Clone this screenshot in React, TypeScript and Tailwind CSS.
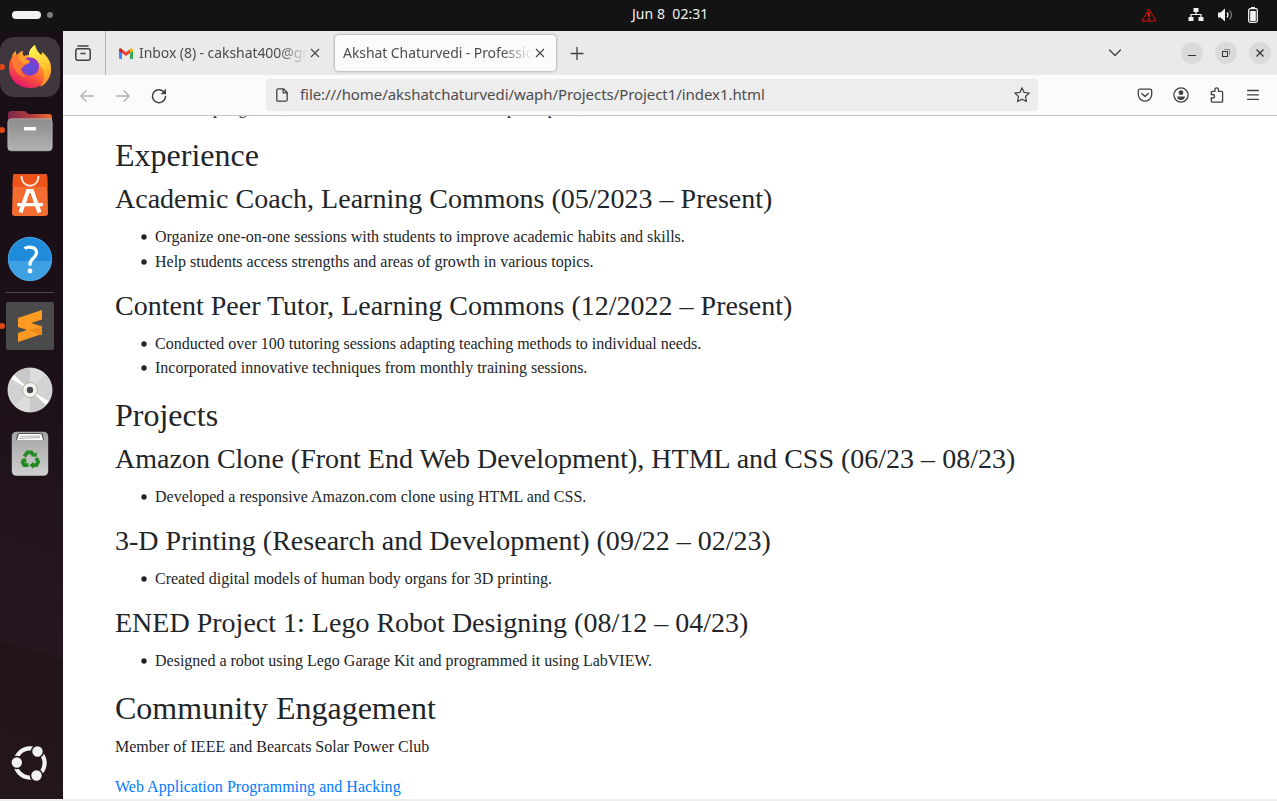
import React from "react";

function Dot() {
  return <span className="absolute -left-px top-1/2 -mt-[3px] h-[6px] w-[6px] rounded-full bg-[#dd4814]" />;
}

function Firefox() {
  return (
    <svg width="44" height="46" viewBox="0 0 44 46" className="-mt-[2px]">
      <defs>
        <linearGradient id="ffBody" x1="0.8" y1="0.05" x2="0.3" y2="1">
          <stop offset="0" stopColor="#fff144" />
          <stop offset="0.35" stopColor="#ffa42b" />
          <stop offset="0.65" stopColor="#ff5a36" />
          <stop offset="1" stopColor="#e3126f" />
        </linearGradient>
        <linearGradient id="ffTail" x1="0.3" y1="0" x2="0.7" y2="1">
          <stop offset="0" stopColor="#fff44f" />
          <stop offset="0.6" stopColor="#ffc531" />
          <stop offset="1" stopColor="#ff8a23" />
        </linearGradient>
        <radialGradient id="ffGlobe" cx="0.5" cy="0.6" r="0.55">
          <stop offset="0" stopColor="#5b50dd" />
          <stop offset="0.6" stopColor="#6f45cf" />
          <stop offset="1" stopColor="#a033c4" />
        </radialGradient>
      </defs>
      <path d="M4 14C4 11 6 9 8 8c0 2 0 3 1 4 2-2 4-4 6-4-1 3 0 4 1 5 2-1 3-1 5-1 0-5 3-8 6-10 1 5 3 7 6 10 1-1 1-1 1-3 5 4 9 9 9 16 0 12-9 20-21 20S1 36 1 25c0-4 1-8 3-11z" fill="url(#ffBody)" />
      <path d="M21 12c0-5 3-8 6-10 1 5 3 7 7 11l1-2c4 4 8 9 8 15 0 9-5 15-11 18 5-7 6-16 0-22-3-4-7-5-11-7z" fill="url(#ffTail)" />
      <circle cx="22" cy="23.5" r="9.2" fill="url(#ffGlobe)" />
      <path d="M8 12c4 0 7 1 10 5 3 0 4 1 4 2-1 2-4 2-5 3-2 1-2 3-4 3-1 4 2 7 5 9-8-1-12-7-13-12-1-5 0-8 3-10z" fill="#ff7a30" />
      <path d="M10 12c5 0 7 3 9 5l3 1c-1 2-4 2-5 3-4-2-7-4-7-9z" fill="#ffa02d" />
    </svg>
  );
}

function Folder() {
  return (
    <svg width="46" height="42" viewBox="0 0 46 42" className="mt-[2px]">
      <defs>
        <linearGradient id="fdBack" x1="0" x2="1">
          <stop offset="0" stopColor="#7b2849" />
          <stop offset="0.55" stopColor="#b83d3c" />
          <stop offset="1" stopColor="#ee6f31" />
        </linearGradient>
        <linearGradient id="fdFront" x1="0" y1="0" x2="0" y2="1">
          <stop offset="0" stopColor="#8c8c8c" />
          <stop offset="1" stopColor="#b2b2b2" />
        </linearGradient>
      </defs>
      <path d="M1 18V4q0-3 3-3h13q2 0 3 2l2 1h20q3 0 3 3v11z" fill="url(#fdBack)" />
      <rect x="0.8" y="8.8" width="44.4" height="32" rx="3.5" fill="url(#fdFront)" stroke="#c7c7c7" strokeWidth="0.6" />
      <rect x="17" y="17" width="12" height="3.4" rx="1" fill="#fff" />
    </svg>
  );
}

function Store() {
  return (
    <svg width="38" height="44" viewBox="0 0 38 44">
      <path d="M4 1h30q2 0 2.200 2L37 40q0 3-3 3H4q-3 0-3-3L2 3q0-2 2-2z" fill="#f36d32" />
      <path d="M4 1h30q2 0 2.200 2l.3 11h-35L2 3q0-2 2-2z" fill="#ee541a" />
      <path d="M10.500 3c0 13 17 13 17 0" fill="none" stroke="#ffe6da" strokeWidth="1.9" />
      <path d="M9.500 39.500l7.500-21.500h4l7.500 21.500" fill="none" stroke="#fff" strokeWidth="4" />
      <rect x="6" y="30" width="26" height="3.3" rx="1" fill="#fff" />
    </svg>
  );
}

function Help() {
  return (
    <svg width="46" height="46" viewBox="0 0 46 46">
      <clipPath id="hpClip"><circle cx="23" cy="23" r="22" /></clipPath>
      <g clipPath="url(#hpClip)">
        <path d="M0 0h46v25H0z" fill="#218bdb" />
        <path d="M0 25h46v21H0z" fill="#40a0e4" />
      </g>
      <circle cx="23" cy="23" r="21.7" fill="none" stroke="#59ade8" strokeWidth="0.7" />
      <path d="M17.500 12.500c3-1.800 12-2.500 12 4 0 5.500-6.500 6-6.500 11.500v1.500" fill="none" stroke="#fff" strokeWidth="3.2" />
      <circle cx="23" cy="35" r="2.4" fill="#fff" />
    </svg>
  );
}

function Sublime() {
  return (
    <svg width="48" height="48" viewBox="0 0 48 48">
      <rect width="48" height="48" rx="2" fill="#4b4b4b" />
      <path d="M12 31l12-4 12-3.500V32L12 40z" fill="#ff9b22" />
      <path d="M12 16l24-8v9.500L25 21l11 3.500V33L12 25z" fill="#ff9b22" />
      <path d="M36 24.500V33l-14-4.700z" fill="#ee8a1a" />
    </svg>
  );
}

function Disc() {
  return (
    <svg width="46" height="46" viewBox="0 0 46 46">
      <circle cx="23" cy="23" r="22" fill="#d2d2d2" stroke="#f0f0f0" strokeWidth="0.8" />
      <path d="M23 23L5 11a22 22 0 0 1 18-10zM23 23l18 12a22 22 0 0 1-18 10z" fill="#c9c9c9" />
      <path d="M23 23L23 1a22 22 0 0 1 15 6zM23 23v22a22 22 0 0 1-15-6z" fill="#dcdcdc" />
      <path d="M23 23L4.500 12l2.800-4zM23 23l18.500 11-2.800 4z" fill="#fff" />
      <circle cx="23" cy="23" r="7.4" fill="#f4f4f2" stroke="#aaa393" strokeWidth="0.8" />
      <circle cx="23" cy="23" r="3.2" fill="#4a4a4a" />
    </svg>
  );
}

function Trash() {
  return (
    <svg width="38" height="46" viewBox="0 0 38 46">
      <defs>
        <linearGradient id="trBody" x1="0" y1="0" x2="0" y2="1">
          <stop offset="0" stopColor="#a4a4a4" />
          <stop offset="1" stopColor="#cfcfcf" />
        </linearGradient>
      </defs>
      <rect x="0.8" y="0.8" width="36.4" height="44" rx="4.5" fill="url(#trBody)" />
      <path d="M5 9l1-5q1-2 3-2h20q3 0 3 2l1 5z" fill="#555" />
      <path d="M6 9l2-6h22l1 2 1 4z" fill="#fff" />
      <path d="M9 5.500l20-.5M8 7.500l21-1" stroke="#999" strokeWidth="0.8" />
      <g fill="none" stroke="#218b21" strokeWidth="3.7">
        <path d="M13.300 25.500l3-4.200h4.200l1.800 2.800" />
        <path d="M25.200 27l2 4-1.800 3.200H21.500" />
        <path d="M17.500 34.200h-4.300l-1.600-2.900 1.800-3.200" />
      </g>
      <path d="M20 25.300l5.500.7.500-5zM22.500 30.500l-4 3.700 4 3.700zM9.800 29l5-2 1.200 5z" fill="#218b21" />
    </svg>
  );
}

function Ubuntu() {
  return (
    <svg width="38" height="38" viewBox="0 0 38 38">
      <circle cx="19" cy="19" r="14.6" fill="none" stroke="#f2f2f2" strokeWidth="4.2" />
      <g fill="#f2f2f2" stroke="#22151c" strokeWidth="1.6">
        <circle cx="5.800" cy="18.500" r="6" />
        <circle cx="26.500" cy="7.500" r="6" />
        <circle cx="25.500" cy="31.500" r="6" />
      </g>
    </svg>
  );
}

function Gmail() {
  return (
    <svg width="14" height="11" viewBox="0 0 14 11">
      <path d="M0 2v8q0 1 1 1h2V4z" fill="#4285f4" />
      <path d="M14 2v8q0 1-1 1h-2V4z" fill="#34a853" />
      <path d="M11 1.200V5l3-2.200V1.500Q13.500 0 12 .4z" fill="#fbbc04" />
      <path d="M0 1.500V2.800L3 5V1.200L2 .4Q.5 0 0 1.500z" fill="#c5221f" />
      <path d="M3 1.200l4 3 4-3V5L7 8 3 5z" fill="#ea4335" />
    </svg>
  );
}

function Cross() {
  return (
    <svg width="10" height="10" viewBox="0 0 10 10" className="shrink-0">
      <path d="M1 1l8 8M9 1l-8 8" stroke="#444" strokeWidth="1.1" />
    </svg>
  );
}

const stroke = { fill: "none", stroke: "#414141", strokeWidth: 1.3, strokeLinecap: "round", strokeLinejoin: "round" } as const;

function TopBar() {
  return (
    <header className="grid h-[31px] shrink-0 grid-cols-[632px_1fr_136px] items-center bg-[#131313] text-[#f2f2f2]">
      <div className="flex items-center gap-[6px] pb-px pl-[12px]">
        <span className="h-[8px] w-[29px] rounded-full bg-[#f2f2f2]" />
        <span className="h-[6px] w-[6px] rounded-full bg-[#7d7d7d]" />
      </div>
      <div className="whitespace-pre pb-[5px] text-[14px] tracking-[0.04px]">Jun 8  02:31</div>
      <div className="flex items-center pb-px">
        <svg width="16" height="14" viewBox="0 0 16 14">
          <path d="M8 1L1 13h14z" fill="none" stroke="#e01010" strokeWidth="1" />
          <path d="M8 4v5M8 10.300v1.700" stroke="#e01010" strokeWidth="2" />
        </svg>
        <svg width="16" height="14" viewBox="0 0 16 14" className="ml-[31px]">
          <path d="M5.500 0h5v4h-5zM.5 9h5v4h-5zM10.500 9h5v4h-5z" fill="#f2f2f2" />
          <path d="M8 3v4M3 10V6.500h10V10" fill="none" stroke="#f2f2f2" strokeWidth="1.200" />
        </svg>
        <svg width="15" height="14" viewBox="0 0 15 14" className="ml-[14px]">
          <path d="M0 4.500h2.500L7 .5v13L2.500 9.500H0z" fill="#f2f2f2" />
          <path d="M9 4.500q2 2.500 0 5" fill="none" stroke="#f2f2f2" strokeWidth="1.300" />
          <path d="M11.500 2.500q4 4.500 0 9" fill="none" stroke="#777" strokeWidth="1.300" />
        </svg>
        <svg width="10" height="16" viewBox="0 0 10 16" className="ml-[15px]">
          <path d="M3 0h4v2H3z" fill="#f2f2f2" />
          <rect x="0.700" y="1.700" width="8.600" height="13.600" rx="1.500" fill="none" stroke="#f2f2f2" strokeWidth="1.300" />
          <path d="M2.200 4h5.600v10H2.200z" fill="#f2f2f2" />
        </svg>
      </div>
    </header>
  );
}

function Dock() {
  return (
    <aside className="flex h-[768px] w-[63px] shrink-0 flex-col bg-[linear-gradient(197deg,#180e15_0%,#1b1018_40%,#27161f_79.8%,#201419_79.9%,#23161c_100%)]">
      <div className="relative mt-[6px] flex h-[60px] w-[60px] items-center justify-center rounded-[14px] bg-[#40363d]">
        <Dot /><Firefox />
      </div>
      <div className="relative flex h-[66px] w-[60px] items-center justify-center"><Dot /><Folder /></div>
      <div className="flex h-[64px] w-[60px] items-center justify-center"><Store /></div>
      <div className="flex h-[64px] w-[60px] items-center justify-center"><Help /></div>
      <div className="ml-[6px] mt-[1px] h-px w-[48px] shrink-0 bg-[#50464c]" />
      <div className="relative flex h-[66px] w-[60px] items-center justify-center"><Dot /><Sublime /></div>
      <div className="flex h-[62px] w-[60px] items-center justify-center"><Disc /></div>
      <div className="flex h-[66px] w-[60px] items-center justify-center"><Trash /></div>
      <div className="mb-[17px] mt-auto flex w-[60px] justify-center"><Ubuntu /></div>
    </aside>
  );
}

function TabBar() {
  return (
    <div className="flex h-[44px] shrink-0 items-center bg-[#eaeaea] text-[14px] text-[#4c4c4c]">
      <div className="flex h-full w-[43px] items-center justify-center border-r border-[#b5b5b5] pr-[2px]">
        <svg width="16" height="16" viewBox="0 0 16 16">
          <path d="M3 1h10" {...stroke} strokeWidth="1.500" />
          <rect x="0.800" y="3.800" width="14.400" height="11.400" rx="2" {...stroke} strokeWidth="1.500" />
          <path d="M6 8.500h4" {...stroke} strokeWidth="1.500" />
        </svg>
      </div>
      <div className="flex h-[36px] w-[224px] items-center pl-[13px]">
        <Gmail />
        <span className="ml-[6px] mr-px w-[170px] overflow-hidden whitespace-nowrap pb-[2px] tracking-[-0.07px] [mask-image:linear-gradient(to_right,black_140px,transparent_168px)]">Inbox (8) - cakshat400@gmail.com</span>
        <Cross />
      </div>
      <div className="ml-[5px] flex h-[36px] w-[221px] items-center rounded-[4px] bg-[#fbfbfb] pl-[8px] shadow-[0_0_3px_rgba(0,0,0,0.45)]">
        <span className="mr-[2px] w-[190px] overflow-hidden whitespace-nowrap pb-[2px] tracking-[-0.07px] [mask-image:linear-gradient(to_right,black_158px,transparent_190px)]">Akshat Chaturvedi - Professional</span>
        <Cross />
      </div>
      <svg width="14" height="14" viewBox="0 0 14 14" className="ml-[14px]"><path d="M7 1.500v12M1 7.500h12" {...stroke} /></svg>
      <div className="ml-auto flex items-center pr-[6px]">
        <svg width="14" height="8" viewBox="0 0 14 8" className="mr-[59px]"><path d="M1.500 1L7 6.500 12.500 1" {...stroke} /></svg>
        <div className="flex gap-[12px]">
          <span className="flex h-[22px] w-[22px] items-center justify-center rounded-full bg-[#dadada]">
            <svg width="8" height="8" viewBox="0 0 8 8"><path d="M0 6.500h8" stroke="#333" /></svg>
          </span>
          <span className="flex h-[22px] w-[22px] items-center justify-center rounded-full bg-[#dadada]">
            <svg width="8" height="8" viewBox="0 0 8 8" fill="none"><path d="M2 .5h5.500V6" stroke="#888" /><rect x="0.500" y="2.500" width="5" height="5" stroke="#333" /></svg>
          </span>
          <span className="flex h-[22px] w-[22px] items-center justify-center rounded-full bg-[#dadada]">
            <svg width="8" height="8" viewBox="0 0 8 8"><path d="M.5.5l7 7M7.500.5l-7 7" stroke="#333" strokeWidth="1.300" /></svg>
          </span>
        </div>
      </div>
    </div>
  );
}

function NavBar() {
  return (
    <div className="flex h-[41px] shrink-0 items-center border-b border-[#c6c6c6] bg-[#fbfbfb]">
      <svg width="14" height="12" viewBox="0 0 14 12" className="ml-[17px] mt-px"><path d="M6 .8L.8 6 6 11.200M1 6h12.500" {...stroke} stroke="#b0b0b0" /></svg>
      <svg width="14" height="12" viewBox="0 0 14 12" className="ml-[22px] mt-px"><path d="M8 .8L13.200 6 8 11.200M.5 6H13" {...stroke} stroke="#b0b0b0" /></svg>
      <svg width="16" height="16" viewBox="0 0 16 16" className="ml-[21px] mt-px">
        <path d="M13.700 5A6.500 6.500 0 1 0 14.500 8.500" {...stroke} strokeWidth="1.500" />
        <path d="M15 .8V6.200H9.600z" fill="#414141" />
      </svg>
      <div className="ml-[99px] flex h-[32px] w-[772px] items-center rounded-[4px] bg-[#ededed] pl-[10px] pr-[8px]">
        <svg width="12" height="14" viewBox="0 0 12 14"><path d="M2.300.8H7.500L11.200 4.500v7.200q0 1.500-1.500 1.500H2.300Q.8 13.200.8 11.700V2.300Q.8.8 2.300.8zM7.200 1v3.800H11" {...stroke} /></svg>
        <span className="ml-[12px] whitespace-nowrap pb-[2px] text-[15px] leading-[20px] tracking-[-0.06px] text-[#4c4c4c]">file:///home/akshatchaturvedi/waph/Projects/Project1/index1.html</span>
        <svg width="16" height="16" viewBox="0 0 16 16" className="ml-auto"><path d="M8 .8l2.100 4.600 5.100.6-3.700 3.500.9 5L8 12.200l-4.400 2.300.9-5L.8 6l5.100-.6z" {...stroke} strokeWidth="1.200" /></svg>
      </div>
      <div className="ml-auto flex items-center gap-[20px] pr-[18px]">
        <svg width="16" height="16" viewBox="0 0 16 16"><path d="M3 2.200h10q1.700 0 1.700 1.700V7.500a6.700 6.700 0 0 1-13.400 0V3.900Q1.300 2.200 3 2.200zM4.700 6.500L8 9.500l3.300-3" {...stroke} /></svg>
        <svg width="16" height="16" viewBox="0 0 16 16"><circle cx="8" cy="8" r="7.100" {...stroke} /><circle cx="8" cy="5.700" r="2.400" fill="#414141" /><path d="M4 9.500h8q-.5 3.500-4 3.500T4 9.500z" fill="#414141" /></svg>
        <svg width="16" height="16" viewBox="0 0 16 16"><path d="M2.300 7.500V5.300q0-1 1-1H6V2.500a1.700 1.700 0 0 1 3.400 0v1.800h3.200q1 0 1 1v8.900q0 1-1 1H3.300q-1 0-1-1V11h1.500a1.700 1.700 0 0 0 0-3.500z" {...stroke} /></svg>
        <svg width="12" height="16" viewBox="0 0 12 16" className="ml-[2px]"><path d="M.6 3.500h10.800M.6 7.900h10.800M.6 12.400h10.800" {...stroke} /></svg>
      </div>
    </div>
  );
}

function Section({ title, children }: { title: string; children: React.ReactNode }) {
  return (
    <section>
      <h2 className="mb-[8px] text-[32px] leading-[38.4px]">{title}</h2>
      {children}
    </section>
  );
}

function Entry({ title, items }: { title: string; items: string[] }) {
  return (
    <>
      <h3 className="mb-[8px] text-[28px] leading-[33.6px] tracking-[0.006px]">{title}</h3>
      <ul className="mb-4 pl-[26px]">
        {items.map((item) => (
          <li key={item} className="flex h-[24.540px] items-center gap-[8px] leading-[24px]">
            <svg width="6" height="6" viewBox="0 0 6 6" className="mt-[2px]"><circle cx="3" cy="3" r="2.700" fill="#212529" /></svg>
            <span className="pt-[2px]">{item}</span>
          </li>
        ))}
      </ul>
    </>
  );
}

function Page() {
  return (
    <main className="flex min-h-0 flex-1 flex-col overflow-hidden bg-white px-[52px] font-['Liberation_Serif',serif] text-[16px] leading-[24px] text-[#212529]">
      <div className="-mt-[19px]">
        <p className="mb-[15px] flex whitespace-nowrap">
          <span className="w-[89px]">Volunteer in</span>
          <span className="w-[303px]">Spring 2023, worked with a team of more than 100</span>
          <span>participants,</span>
        </p>
        <Section title="Experience">
          <Entry title="Academic Coach, Learning Commons (05/2023 – Present)" items={["Organize one-on-one sessions with students to improve academic habits and skills.", "Help students access strengths and areas of growth in various topics."]} />
          <Entry title="Content Peer Tutor, Learning Commons (12/2022 – Present)" items={["Conducted over 100 tutoring sessions adapting teaching methods to individual needs.", "Incorporated innovative techniques from monthly training sessions."]} />
        </Section>
        <Section title="Projects">
          <Entry title="Amazon Clone (Front End Web Development), HTML and CSS (06/23 – 08/23)" items={["Developed a responsive Amazon.com clone using HTML and CSS."]} />
          <Entry title="3-D Printing (Research and Development) (09/22 – 02/23)" items={["Created digital models of human body organs for 3D printing."]} />
          <Entry title="ENED Project 1: Lego Robot Designing (08/12 – 04/23)" items={["Designed a robot using Lego Garage Kit and programmed it using LabVIEW."]} />
        </Section>
        <Section title="Community Engagement">
          <p className="mb-4">Member of IEEE and Bearcats Solar Power Club</p>
          <a className="tracking-[0.02px] text-[#007bff]" href="#">Web Application Programming and Hacking</a>
        </Section>
      </div>
    </main>
  );
}

export default function App() {
  return (
    <div className="flex h-[801px] w-[1277px] flex-col overflow-hidden bg-[#efefef] font-['Noto_Sans',sans-serif]">
      <TopBar />
      <div className="flex h-[768px]">
        <Dock />
        <div className="flex min-w-0 flex-1 flex-col">
          <TabBar />
          <NavBar />
          <Page />
        </div>
      </div>
    </div>
  );
}
